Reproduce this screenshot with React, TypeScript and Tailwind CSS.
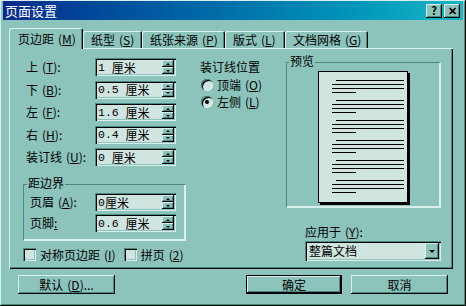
import React from 'react';

const FONT = "font-['Noto_Sans_CJK_SC','Noto_Sans',sans-serif]";
const MONO = "font-['Liberation_Mono','Noto_Sans_CJK_SC',monospace]";
const RAISED =
  'shadow-[inset_-1px_-1px_#000,inset_1px_1px_#d8f0ec,inset_-2px_-2px_#4a8a82,inset_2px_2px_#8cc4bc]';
const SUNKEN =
  'shadow-[inset_1px_1px_#4a8a82,inset_2px_2px_#000,inset_-1px_-1px_#d8f0ec,inset_-2px_-2px_#8cc4bc]';
const ETCHED = 'shadow-[inset_1px_1px_#4a8a82,inset_-1px_-1px_#d8f0ec,1px_1px_#d8f0ec]';

const Key = ({ k }: { k: string }) => (
  <span className="ml-[4px]">
    (<span className="underline">{k}</span>)
  </span>
);

const Spin = ({ num, unit }: { num: string; unit: string }) => (
  <div className={`flex w-[81px] h-[18px] bg-[#d0e4e0] ${SUNKEN} pl-[3px] pr-[2px] py-[2px] items-center`}>
    <span className="flex-1 flex items-center leading-none pt-[1px]">
      <span className={`${MONO} text-[11.5px] whitespace-pre`}>{num}</span>
      <span className="text-[12px]">{unit}</span>
    </span>
    <div className="flex flex-col w-[12px] h-[14px]">
      <div className={`flex-1 flex items-center justify-center bg-[#8cc4bc] ${RAISED}`}>
        <div className="w-0 h-0 border-l-[2px] border-r-[2px] border-b-[2px] border-l-transparent border-r-transparent border-b-black" />
      </div>
      <div className={`flex-1 flex items-center justify-center bg-[#8cc4bc] ${RAISED}`}>
        <div className="w-0 h-0 border-l-[2px] border-r-[2px] border-t-[2px] border-l-transparent border-r-transparent border-t-black" />
      </div>
    </div>
  </div>
);

const Row = ({ label, k, num, unit = '厘米', w = 69 }: { label: string; k?: string; num: string; unit?: string; w?: number }) => (
  <div className="flex items-center h-[18px]">
    <span className="text-[12px] leading-none" style={{ width: w }}>
      {label}
      {k ? <Key k={k} /> : null}
      {k ? ':' : ''}
    </span>
    <Spin num={num} unit={unit} />
  </div>
);

const Radio = ({ checked, label, k }: { checked?: boolean; label: string; k: string }) => (
  <div className="flex items-center h-[17px]">
    <div className="w-[12px] h-[12px] rounded-full bg-[#d0e4e0] shadow-[inset_1px_1px_#4a8a82,inset_2px_2px_#000,inset_-1px_-1px_#d8f0ec] flex items-center justify-center">
      {checked ? <div className="w-[4px] h-[4px] rounded-full bg-black" /> : null}
    </div>
    <span className="ml-[4px] text-[12px] leading-none">
      {label}
      <Key k={k} />
    </span>
  </div>
);

const Check = ({ label, k }: { label: string; k: string }) => (
  <div className="flex items-center">
    <div className={`w-[13px] h-[13px] bg-[#d0e4e0] ${SUNKEN}`} />
    <span className="ml-[4px] text-[12px] leading-none">
      {label}
      <Key k={k} />
    </span>
  </div>
);

const Tab = ({ label, k, active, w }: { label: string; k: string; active?: boolean; w: number }) => (
  <div
    className={`flex items-center bg-[#8cc4bc] text-[12px] leading-none rounded-t-[2px] shadow-[inset_1px_1px_#d8f0ec,inset_-1px_0_#000,inset_-2px_0_#4a8a82] ${
      active ? 'h-[21px] -mb-[1px] relative z-10 pl-[9px]' : 'h-[17px] pl-[8px]'
    }`}
    style={{ width: w }}
  >
    {label}
    <Key k={k} />
  </div>
);

const Button = ({ children, def, w }: { children: React.ReactNode; def?: boolean; w: number }) => (
  <div
    className={`flex items-center justify-center h-[19px] bg-[#8cc4bc] text-[12px] leading-none ${
      def
        ? 'shadow-[inset_0_0_0_1px_#000,inset_-2px_-2px_#000,inset_2px_2px_#d8f0ec,inset_-3px_-3px_#4a8a82]'
        : RAISED
    }`}
    style={{ width: w }}
  >
    {children}
  </div>
);

const Page = () => (
  <div className="w-[90px] h-[132px] bg-[#d0e4e0] border border-black shadow-[2px_2px_0_#000] pl-[13px] pt-[8px] flex flex-col gap-[7px]">
    {[0, 1, 2, 3, 4, 5].map((g) => (
      <div key={g} className="flex flex-col gap-[3px]">
        <div className="ml-[4px] w-[68px] h-[1px] bg-black" />
        <div className="w-[72px] h-[1px] bg-black" />
        <div className="w-[72px] h-[1px] bg-black" />
        <div className="w-[24px] h-[1px] bg-black" />
      </div>
    ))}
  </div>
);

export default function App() {
  return (
    <div
      className={`${FONT} w-[466px] h-[306px] bg-[#8cc4bc] text-black flex flex-col shadow-[inset_-1px_-1px_#000,inset_1px_1px_#d8f0ec,inset_-2px_-2px_#4a8a82] overflow-hidden`}
    >
      <div className="mt-[1px] mx-[3px] h-[19px] bg-gradient-to-r from-[#0a2a8c] to-[#18b6c6] flex items-center pl-[2px] pr-[3px]">
        <span className="text-white text-[13px] leading-none flex-1">页面设置</span>
        <div className={`w-[16px] h-[14px] bg-[#8cc4bc] ${RAISED} flex items-center justify-center text-[11px] font-bold leading-none`}>
          ?
        </div>
        <div className={`ml-[2px] w-[16px] h-[14px] bg-[#8cc4bc] ${RAISED} flex items-center justify-center text-[11px] font-bold leading-none`}>
          ✕
        </div>
      </div>

      <div className="mt-[8px] h-[20px] pl-[9px] flex items-end">
        <Tab label="页边距" k="M" active w={74} />
        <Tab label="纸型" k="S" w={59} />
        <Tab label="纸张来源" k="P" w={83} />
        <Tab label="版式" k="L" w={60} />
        <Tab label="文档网格" k="G" w={83} />
      </div>

      <div className="ml-[9px] w-[444px] h-[221px] shadow-[inset_1px_1px_#d8f0ec,inset_-1px_-1px_#000,inset_-2px_-2px_#4a8a82] flex pt-[10px]">
        <div className="w-[191px] pl-[14px] flex flex-col">
          <div className="pl-[3px] flex flex-col gap-[4.5px]">
            <Row label="上" k="T" num="1 " />
            <Row label="下" k="B" num="0.5 " />
            <Row label="左" k="F" num="1.6 " />
            <Row label="右" k="H" num="0.4 " />
            <Row label="装订线" k="U" num="0 " />
          </div>

          <div className={`relative mt-[18px] w-[162px] h-[56px] ${ETCHED} pl-[7px] pt-[9px] flex flex-col gap-[3px]`}>
            <span className="absolute -top-[7px] left-[4px] px-[1px] bg-[#8cc4bc] text-[12px] leading-none">距边界</span>
            <Row label="页眉" k="A" num="0" w={65} />
            <div className="flex items-center h-[18px]">
              <span className="w-[65px] text-[12px] leading-none">
                页脚<span className="underline">:</span>
              </span>
              <Spin num="0.6 " unit="厘米" />
            </div>
          </div>

          <div className="mt-[8px] flex gap-[8px]">
            <Check label="对称页边距" k="I" />
            <Check label="拼页" k="2" />
          </div>
        </div>

        <div className="w-[86px] flex flex-col pt-[3px]">
          <span className="text-[12px] leading-none">装订线位置</span>
          <div className="mt-[3px] pl-[1px] flex flex-col">
            <Radio label="顶端" k="O" />
            <Radio label="左侧" k="L" checked />
          </div>
        </div>

        <div className="w-[155px] flex flex-col pt-[4px]">
          <div className={`relative w-[154px] h-[145px] ${ETCHED} pl-[32px] pt-[9px]`}>
            <span className="absolute -top-[7px] left-[3px] px-[1px] bg-[#8cc4bc] text-[12px] leading-none">预览</span>
            <Page />
          </div>
          <div className="pl-[19px] mt-[19px] flex flex-col">
            <div className="text-[12px] leading-none">
              应用于
              <Key k="Y" />:
            </div>
            <div className={`mt-[3px] w-[136px] h-[20px] bg-[#d0e4e0] ${SUNKEN} flex items-center pl-[4px] pr-[2px]`}>
              <span className="flex-1 text-[12px] leading-none">整篇文档</span>
              <div className={`w-[14px] h-[16px] bg-[#8cc4bc] ${RAISED} flex items-center justify-center`}>
                <div className="w-0 h-0 border-l-[3px] border-r-[3px] border-t-[3px] border-l-transparent border-r-transparent border-t-black" />
              </div>
            </div>
          </div>
        </div>
      </div>

      <div className="mt-[6px] flex">
        <div className="ml-[18px]">
          <Button w={97}>
            默认
            <Key k="D" />
            ...
          </Button>
        </div>
        <div className="ml-[131px]">
          <Button w={96} def>
            确定
          </Button>
        </div>
        <div className="ml-[9px]">
          <Button w={97}>取消</Button>
        </div>
      </div>
    </div>
  );
}
